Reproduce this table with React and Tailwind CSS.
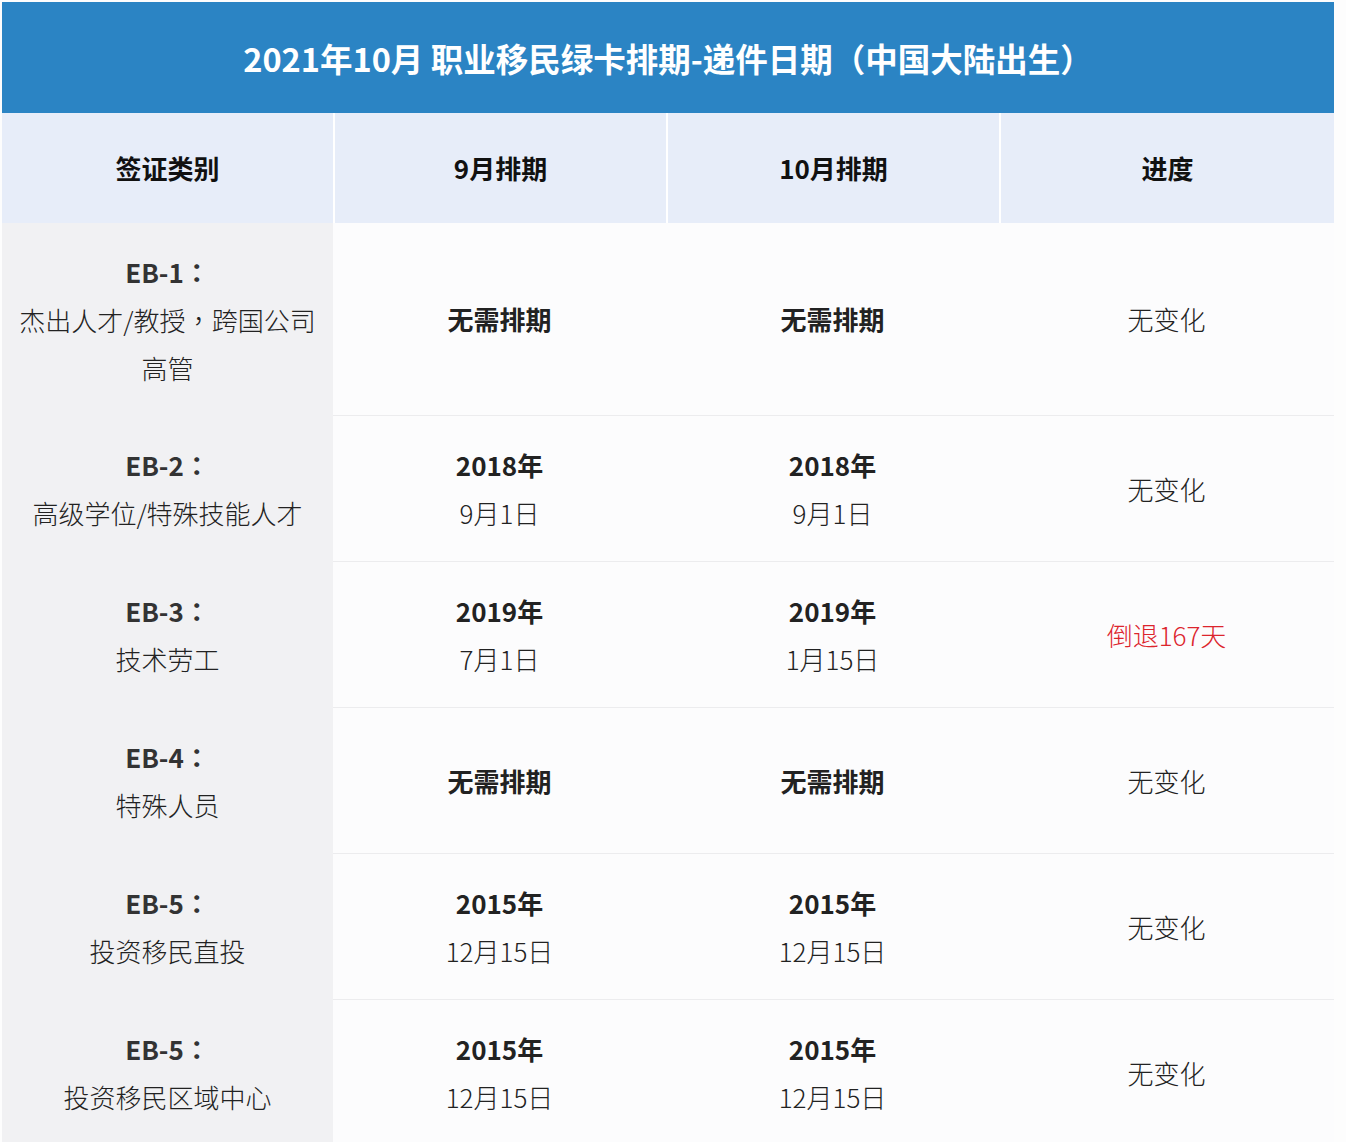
const P = ({ children }) => (
  // centred punctuation as in the reference (TC puts colons/commas in the middle of the cell)
  <span style={{ fontFamily: '"Noto Sans CJK TC", sans-serif' }}>{children}</span>
);

const rows = [
  { code: "EB-1", desc: [<>杰出人才/教授<P>，</P>跨国公司</>, "高管"], sep: ["无需排期"], oct: ["无需排期"], progress: "无变化", tall: true },
  { code: "EB-2", desc: ["高级学位/特殊技能人才"], sep: ["2018年", "9月1日"], oct: ["2018年", "9月1日"], progress: "无变化" },
  { code: "EB-3", desc: ["技术劳工"], sep: ["2019年", "7月1日"], oct: ["2019年", "1月15日"], progress: "倒退167天", red: true },
  { code: "EB-4", desc: ["特殊人员"], sep: ["无需排期"], oct: ["无需排期"], progress: "无变化" },
  { code: "EB-5", desc: ["投资移民直投"], sep: ["2015年", "12月15日"], oct: ["2015年", "12月15日"], progress: "无变化" },
  { code: "EB-5", desc: ["投资移民区域中心"], sep: ["2015年", "12月15日"], oct: ["2015年", "12月15日"], progress: "无变化" },
];

function DateCell({ lines }) {
  // a single line is "无需排期" (bold); two lines are year (bold) + day
  return (
    <div className="flex flex-col items-center justify-center border-b border-[#ececee] bg-[#fcfcfd] text-[#222]">
      {lines.map((l, i) => (
        <div key={i} className={i === 0 ? "font-bold" : "font-light"}>{l}</div>
      ))}
    </div>
  );
}

export default function App() {
  return (
    <div className="min-h-screen bg-[#fdfdfd] pl-[2px] pt-[2px] text-[26px] leading-[48px]"
      style={{ fontFamily: '"Noto Sans CJK SC", "Noto Sans", sans-serif' }}>
      <div className="w-[1332px]">
        <div className="flex h-[111px] items-center justify-center bg-[#2b84c4] text-[32.5px] font-bold text-white">
          2021年10月 职业移民绿卡排期-递件日期<P>（</P>中国大陆出生<P>）</P>
        </div>

        <div className="grid grid-cols-[331px_333px_333px_335px]">
          {/* header row */}
          {["签证类别", "9月排期", "10月排期", "进度"].map((h, i) => (
            <div key={h} className={"flex h-[110px] items-center justify-center bg-[#e7edf9] font-bold text-[#111] " + (i > 0 ? "border-l-2 border-white" : "")}>
              {h}
            </div>
          ))}
        </div>

        {rows.map((r, idx) => (
          <div key={idx} className={"grid grid-cols-[331px_333px_333px_335px] " + (r.tall ? "h-[193px]" : "h-[146px]")}>
            <div className="flex flex-col items-center justify-center bg-[#f1f1f3] text-[#222]">
              <div className="font-bold text-[#333]">{r.code}<P>：</P></div>
              {r.desc.map((d, i) => <div key={i} className="font-light">{d}</div>)}
            </div>
            <DateCell lines={r.sep} />
            <DateCell lines={r.oct} />
            <div className={"flex items-center justify-center border-b border-[#ececee] bg-[#fcfcfd] font-light " + (r.red ? "text-[#dc252d]" : "text-[#222]")}>
              {r.progress}
            </div>
          </div>
        ))}
      </div>
    </div>
  );
}
